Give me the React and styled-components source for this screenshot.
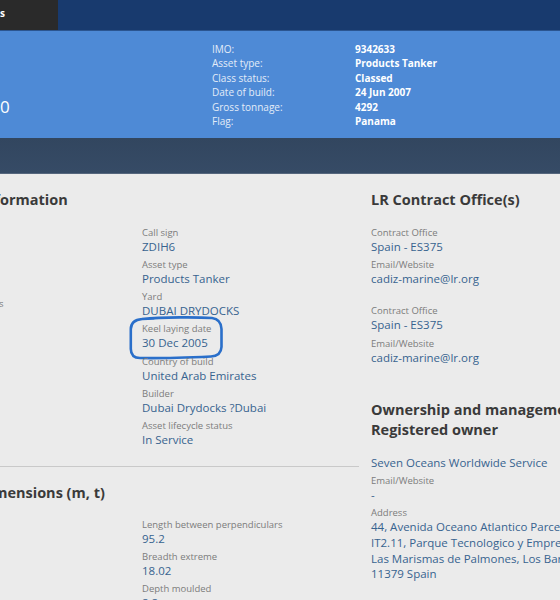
import React from 'react'
import styled, { createGlobalStyle } from 'styled-components'

const GlobalStyle = createGlobalStyle`
  html, body {
    margin: 0;
    padding: 0;
  }
  body {
    width: 560px;
    height: 600px;
    overflow: hidden;
    background: #ebebeb;
    font-family: "Open Sans", "Noto Sans", sans-serif;
  }
`

const shipFacts = [
  ['IMO:', '9342633'],
  ['Asset type:', 'Products Tanker'],
  ['Class status:', 'Classed'],
  ['Date of build:', '24 Jun 2007'],
  ['Gross tonnage:', '4292'],
  ['Flag:', 'Panama'],
]

const infoFields = [
  ['Call sign', 'ZDIH6'],
  ['Asset type', 'Products Tanker'],
  ['Yard', 'DUBAI DRYDOCKS'],
  ['Keel laying date', '30 Dec 2005', true],
  ['Country of build', 'United Arab Emirates'],
  ['Builder', 'Dubai Drydocks ?Dubai'],
  ['Asset lifecycle status', 'In Service'],
]

const dimensionFields = [
  ['Length between perpendiculars', '95.2'],
  ['Breadth extreme', '18.02'],
  ['Depth moulded', '8.8'],
]

const offices = [
  { office: 'Spain - ES375', email: 'cadiz-marine@lr.org' },
  { office: 'Spain - ES375', email: 'cadiz-marine@lr.org' },
]

const Highlight = () => (
  <Marker viewBox="0 0 96 46" width="96" height="46">
    <path
      d="M 14 4 C 35 2, 70 2, 84 3 Q 93 4 93.5 14 L 93.5 32 Q 93 41 83 41.5 C 60 42.5, 30 43.5, 12 43 Q 3 43 2.8 34 L 2.8 14 Q 3 5 14 4 L 26 3.4"
      fill="none"
      stroke="#2a6fca"
      strokeWidth="2.6"
      strokeLinecap="round"
      strokeLinejoin="round"
    />
  </Marker>
)

const Field = ({ label, value, marked }) => (
  <FieldBox>
    {marked && <Highlight />}
    <Label>{label}</Label>
    <Value>{value}</Value>
  </FieldBox>
)

const App = () => {
  return (
    <>
      <GlobalStyle />
      <TopNav>
        <Tab>s</Tab>
      </TopNav>

      <Band>
        <BandTitle>0</BandTitle>
        <FactGrid>
          {shipFacts.map(([k, v]) => (
            <React.Fragment key={k}>
              <FactKey>{k}</FactKey>
              <FactValue>{v}</FactValue>
            </React.Fragment>
          ))}
        </FactGrid>
      </Band>

      <DarkBand />

      <Content>
        <MainCol>
          <Section>
            <Heading>Information</Heading>
            <SectionBody>
              <LeftCol>
                <Label>s</Label>
              </LeftCol>
              <FieldList>
                {infoFields.map(([l, v, m]) => (
                  <Field key={l} label={l} value={v} marked={m} />
                ))}
              </FieldList>
            </SectionBody>
          </Section>

          <Section $last>
            <Heading $shift={-2}>Dimensions (m, t)</Heading>
            <SectionBody $tight>
              <LeftCol />
              <FieldList>
                {dimensionFields.map(([l, v]) => (
                  <Field key={l} label={l} value={v} />
                ))}
              </FieldList>
            </SectionBody>
          </Section>
        </MainCol>

        <SideCol>
          <Heading>LR Contract Office(s)</Heading>
          {offices.map((o, i) => (
            <Group key={i} $first={i === 0}>
              <Field label="Contract Office" value={o.office} />
              <Field label="Email/Website" value={o.email} />
            </Group>
          ))}

          <OwnerHeading>
            Ownership and management
            <br />
            Registered owner
          </OwnerHeading>
          <OwnerGroup>
            <Value>Seven Oceans Worldwide Service</Value>
            <Field label="Email/Website" value="-" />
            <FieldBox>
              <Label>Address</Label>
              <Address>
                44, Avenida Oceano Atlantico Parcela
                <br />
                IT2.11, Parque Tecnologico y Empresarial
                <br />
                Las Marismas de Palmones, Los Barrios
                <br />
                11379 Spain
              </Address>
            </FieldBox>
          </OwnerGroup>
        </SideCol>
      </Content>
    </>
  )
}

export default App

const TopNav = styled.div`
  height: 30px;
  background: #183a6e;
  border-bottom: 1px solid #2b5590;
  display: flex;
`

const Tab = styled.div`
  width: 58px;
  height: 30px;
  box-sizing: border-box;
  background: #2a2a2a;
  color: #ffffff;
  font-size: 10px;
  font-weight: 700;
  line-height: 14px;
  padding-top: 6px;
`

const Band = styled.div`
  height: 107px;
  box-sizing: border-box;
  background: #4e8ad6;
  padding: 11px 0 10px;
  display: flex;
`

const BandTitle = styled.div`
  width: 212px;
  flex: none;
  padding-top: 54px;
  color: #ffffff;
  font-size: 17px;
  line-height: 22px;
`

const FactGrid = styled.div`
  display: grid;
  grid-template-columns: 143px auto;
  font-size: 10px;
  line-height: 14.4px;
`

const FactKey = styled.div`
  color: #e3ecf8;
`

const FactValue = styled.div`
  color: #ffffff;
  font-weight: 700;
`

const DarkBand = styled.div`
  height: 35px;
  background: linear-gradient(180deg, #32465f 0%, #364b66 100%);
  border-bottom: 1px solid #55667d;
`

const Content = styled.div`
  display: grid;
  grid-template-columns: 379px 300px;
  column-gap: 12px;
  margin-left: -20px;
`

const MainCol = styled.div`
  display: flex;
  flex-direction: column;
`

const Section = styled.section`
  padding: ${p => (p.$last ? '16px 0 0' : '16px 0 18px')};
  border-bottom: ${p => (p.$last ? 'none' : '1px solid #c9c9c9')};
`

const Heading = styled.h2`
  margin: 0 0 0 ${p => p.$shift || 0}px;
  font-size: 14.5px;
  line-height: 20px;
  font-weight: 700;
  color: #3a3a3a;
  white-space: nowrap;
`

const SectionBody = styled.div`
  display: grid;
  grid-template-columns: 162px 1fr;
  margin-top: ${p => (p.$tight ? '14.5px' : '15.5px')};
`

const LeftCol = styled.div`
  padding: 64.6px 0 0 19px;
`

const FieldList = styled.div`
  display: flex;
  flex-direction: column;
  gap: 3.3px;
`

const FieldBox = styled.div`
  position: relative;
  display: flex;
  flex-direction: column;
`

const Label = styled.span`
  font-size: 9.5px;
  line-height: 13px;
  color: #7c7c7c;
  white-space: nowrap;
`

const Value = styled.span`
  font-size: 11.5px;
  line-height: 16px;
  color: #37638f;
  white-space: nowrap;
`

const Address = styled(Value)`
  line-height: 15.7px;
`

const Marker = styled.svg`
  position: absolute;
  left: -14px;
  top: -7.5px;
  pointer-events: none;
`

const SideCol = styled.div`
  padding-top: 16px;
  display: flex;
  flex-direction: column;
`

const Group = styled.div`
  display: flex;
  flex-direction: column;
  gap: 3.3px;
  margin-top: ${p => (p.$first ? '15.5px' : '17.5px')};
`

const OwnerHeading = styled(Heading)`
  margin-top: 34px;
`

const OwnerGroup = styled.div`
  display: flex;
  flex-direction: column;
  gap: 3.3px;
  margin-top: 15px;
`
